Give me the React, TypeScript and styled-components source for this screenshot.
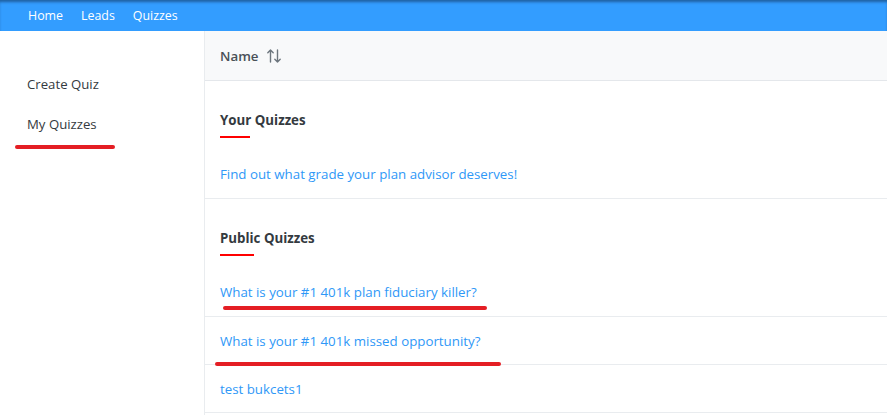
import React from "react";
import styled, { createGlobalStyle } from "styled-components";

const GlobalStyle = createGlobalStyle`
  html, body {
    margin: 0;
    padding: 0;
    background: #ffffff;
    font-family: "Open Sans", "Noto Sans", sans-serif;
    font-size: 13px;
    color: #343a40;
  }
  * { box-sizing: border-box; }
`;

const TopBar = styled.nav`
  height: 31px;
  background: #339dff;
  box-shadow: inset 0 3px 3px -1px #1f5fa0;
  display: flex;
  align-items: center;
  gap: 18px;
  padding-left: 28px;
`;

const TopLink = styled.a`
  color: #ffffff;
  font-size: 12.4px;
  text-decoration: none;
`;

const Body = styled.div`
  display: flex;
  min-height: 384px;
`;

const Sidebar = styled.aside`
  width: 205px;
  flex-shrink: 0;
  border-right: 1px solid #e9ecef;
  padding-top: 43px;
  display: flex;
  flex-direction: column;
  gap: 20px;
`;

const SideItem = styled.a`
  position: relative;
  display: block;
  padding-left: 27px;
  font-size: 13.2px;
  line-height: 20px;
  color: #343a40;
  text-decoration: none;
`;

// red pen strokes drawn over the screenshot
const Scribble = styled.span<{ $left: number; $width: number; $top: number }>`
  position: absolute;
  left: ${(p) => p.$left}px;
  top: ${(p) => p.$top}px;
  width: ${(p) => p.$width}px;
  height: 4px;
  border-radius: 2px;
  background: #e41e24;
  pointer-events: none;
`;

const Main = styled.main`
  flex: 1;
  display: flex;
  flex-direction: column;
`;

const HeaderRow = styled.div`
  height: 50px;
  background: #f8f9fa;
  border-bottom: 1px solid #e4e7eb;
  display: flex;
  align-items: center;
  padding-left: 15px;
  gap: 8px;
  font-weight: 600;
  font-size: 13.3px;
  color: #495057;
`;

const Section = styled.div`
  border-bottom: 1px solid #e9ecef;
`;

const SectionTitle = styled.h6<{ $bar?: number }>`
  margin: 0;
  padding: 29px 0 12px 15px;
  font-size: 13.3px;
  font-weight: 700;
  line-height: 20px;
  color: #343a40;

  &::after {
    content: "";
    display: block;
    width: ${(p) => p.$bar ?? 30}px;
    height: 2px;
    margin-top: 6px;
    background: #ff0000;
  }
`;

const Row = styled.div<{ $border?: boolean }>`
  position: relative;
  height: 48px;
  display: flex;
  align-items: center;
  padding-left: 15px;
  border-bottom: ${(p) => (p.$border ? "1px solid #e9ecef" : "none")};
`;

const QuizLink = styled.a`
  color: #2f98f7;
  font-size: 13.3px;
  text-decoration: none;
`;

const SortIcon = () => (
  <svg width="16" height="16" viewBox="0 0 16 16" fill="none" stroke="#6c757d" strokeWidth="1.4" strokeLinecap="round" strokeLinejoin="round">
    <path d="M4.5 14V2M1.8 4.7L4.5 2l2.7 2.7" />
    <path d="M11.5 2v12M8.8 11.3l2.7 2.7 2.7-2.7" />
  </svg>
);

export default function App() {
  return (
    <>
      <GlobalStyle />
      <TopBar>
        <TopLink href="#">Home</TopLink>
        <TopLink href="#">Leads</TopLink>
        <TopLink href="#">Quizzes</TopLink>
      </TopBar>
      <Body>
        <Sidebar>
          <SideItem href="#">Create Quiz</SideItem>
          <SideItem href="#">
            My Quizzes
            <Scribble $left={15} $width={100} $top={31} />
          </SideItem>
        </Sidebar>
        <Main>
          <HeaderRow>
            Name <SortIcon />
          </HeaderRow>
          <Section>
            <SectionTitle $bar={30}>Your Quizzes</SectionTitle>
            <Row>
              <QuizLink href="#">Find out what grade your plan advisor deserves!</QuizLink>
            </Row>
          </Section>
          <Section>
            <SectionTitle $bar={34}>Public Quizzes</SectionTitle>
            <Row>
              <QuizLink href="#">What is your #1 401k plan fiduciary killer?</QuizLink>
              <Scribble $left={18} $width={264} $top={38} />
            </Row>
          </Section>
          <Row $border>
            <QuizLink href="#">What is your #1 401k missed opportunity?</QuizLink>
            <Scribble $left={10} $width={286} $top={45} />
          </Row>
          <Row $border>
            <QuizLink href="#">test bukcets1</QuizLink>
          </Row>
        </Main>
      </Body>
    </>
  );
}
